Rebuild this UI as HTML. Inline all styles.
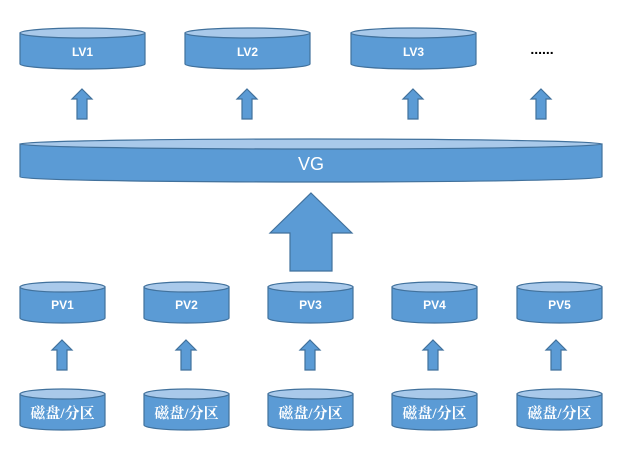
<!DOCTYPE html>
<html><head><meta charset="utf-8"><style>
html,body{margin:0;padding:0;background:#fff;width:628px;height:457px;overflow:hidden}
svg{display:block}
.b{fill:#5b9bd5;stroke:#41719c;stroke-width:1.2}
.t{fill:#a9c9ea;stroke:#41719c;stroke-width:1.2}
.l{font-family:"Liberation Sans",sans-serif;font-weight:bold;font-size:12px;fill:#fff;text-anchor:middle}
.c{font-family:"Liberation Serif","Noto Serif CJK SC",serif;font-weight:bold;font-size:15px;fill:#fff;text-anchor:middle}
</style></head><body>
<svg width="628" height="457" viewBox="0 0 628 457" xmlns="http://www.w3.org/2000/svg">
<defs>
<g id="ar"><path class="b" d="M0 0 L10 10 L5 10 L5 30 L-5 30 L-5 10 L-10 10 Z"/></g>
</defs>
<!-- LV cylinders -->
<g>
<path class="b" d="M20 33 L20 64 A62.5 5 0 0 0 145 64 L145 33 Z"/><ellipse class="t" cx="82.5" cy="33" rx="62.5" ry="5"/>
<text class="l" x="82.5" y="56">LV1</text>
<path class="b" d="M185 33 L185 64 A62.5 5 0 0 0 310 64 L310 33 Z"/><ellipse class="t" cx="247.5" cy="33" rx="62.5" ry="5"/>
<text class="l" x="247.5" y="56">LV2</text>
<path class="b" d="M351 33 L351 64 A62.5 5 0 0 0 476 64 L476 33 Z"/><ellipse class="t" cx="413.5" cy="33" rx="62.5" ry="5"/>
<text class="l" x="413.5" y="56">LV3</text>
<text x="542" y="54" font-family="Liberation Sans,sans-serif" font-size="14" font-weight="bold" text-anchor="middle" fill="#000">......</text>
</g>
<use href="#ar" x="82" y="89"/><use href="#ar" x="247" y="89"/><use href="#ar" x="413" y="89"/><use href="#ar" x="541" y="89"/>
<!-- VG -->
<path class="b" d="M20 144 L20 177 A291 5 0 0 0 602 177 L602 144 Z"/><ellipse class="t" cx="311" cy="144" rx="291" ry="5"/>
<text x="311" y="170" font-family="Liberation Sans,sans-serif" font-size="18" fill="#fff" text-anchor="middle">VG</text>
<!-- big arrow -->
<path class="b" d="M311 193 L352 233 L332 233 L332 271 L290 271 L290 233 L270 233 Z"/>
<!-- PV -->
<g>
<path class="b" d="M20 287 L20 318 A42.5 5 0 0 0 105 318 L105 287 Z"/><ellipse class="t" cx="62.5" cy="287" rx="42.5" ry="5"/><text class="l" x="62.5" y="309">PV1</text>
<path class="b" d="M144 287 L144 318 A42.5 5 0 0 0 229 318 L229 287 Z"/><ellipse class="t" cx="186.5" cy="287" rx="42.5" ry="5"/><text class="l" x="186.5" y="309">PV2</text>
<path class="b" d="M268 287 L268 318 A42.5 5 0 0 0 353 318 L353 287 Z"/><ellipse class="t" cx="310.5" cy="287" rx="42.5" ry="5"/><text class="l" x="310.5" y="309">PV3</text>
<path class="b" d="M392 287 L392 318 A42.5 5 0 0 0 477 318 L477 287 Z"/><ellipse class="t" cx="434.5" cy="287" rx="42.5" ry="5"/><text class="l" x="434.5" y="309">PV4</text>
<path class="b" d="M517 287 L517 318 A42.5 5 0 0 0 602 318 L602 287 Z"/><ellipse class="t" cx="559.5" cy="287" rx="42.5" ry="5"/><text class="l" x="559.5" y="309">PV5</text>
</g>
<use href="#ar" x="62" y="340"/><use href="#ar" x="186" y="340"/><use href="#ar" x="310" y="340"/><use href="#ar" x="433" y="340"/><use href="#ar" x="556" y="340"/>
<!-- disks -->
<g>
<path class="b" d="M20 394 L20 425 A42.5 5 0 0 0 105 425 L105 394 Z"/><ellipse class="t" cx="62.5" cy="394" rx="42.5" ry="5"/><text class="c" x="62.5" y="418">磁盘/分区</text>
<path class="b" d="M144 394 L144 425 A42.5 5 0 0 0 229 425 L229 394 Z"/><ellipse class="t" cx="186.5" cy="394" rx="42.5" ry="5"/><text class="c" x="186.5" y="418">磁盘/分区</text>
<path class="b" d="M268 394 L268 425 A42.5 5 0 0 0 353 425 L353 394 Z"/><ellipse class="t" cx="310.5" cy="394" rx="42.5" ry="5"/><text class="c" x="310.5" y="418">磁盘/分区</text>
<path class="b" d="M392 394 L392 425 A42.5 5 0 0 0 477 425 L477 394 Z"/><ellipse class="t" cx="434.5" cy="394" rx="42.5" ry="5"/><text class="c" x="434.5" y="418">磁盘/分区</text>
<path class="b" d="M517 394 L517 425 A42.5 5 0 0 0 602 425 L602 394 Z"/><ellipse class="t" cx="559.5" cy="394" rx="42.5" ry="5"/><text class="c" x="559.5" y="418">磁盘/分区</text>
</g>
</svg>
</body></html>
